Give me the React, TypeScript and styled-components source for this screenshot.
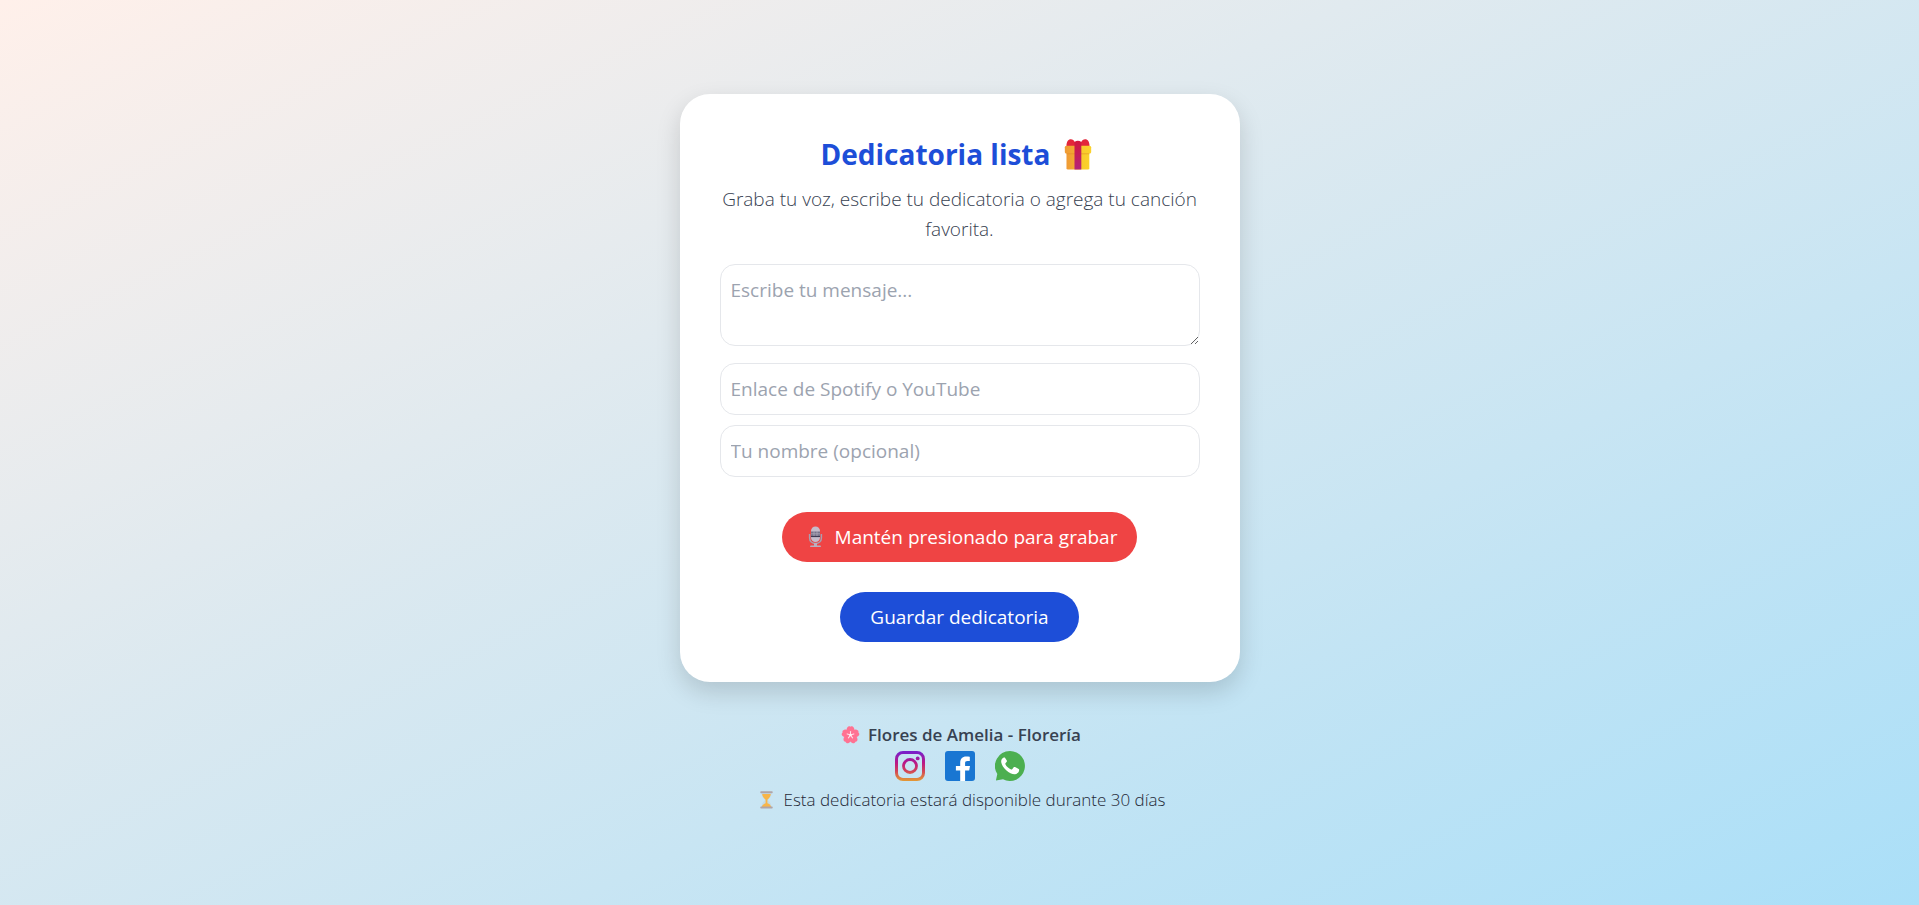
import React from "react";
import styled, { createGlobalStyle } from "styled-components";

const GlobalStyle = createGlobalStyle`
  *, *::before, *::after { box-sizing: border-box; }
  body {
    margin: 0;
    font-family: "Segoe UI", "Open Sans", "Noto Sans", sans-serif;
    font-size: 19px;
    line-height: 30px;
    color: #374151;
  }
  h1, p { margin: 0; }
`;

const Page = styled.main`
  min-height: 100vh;
  padding: 20px;
  display: flex;
  flex-direction: column;
  align-items: center;
  justify-content: center;
  background: linear-gradient(to bottom right, #fff0ea, #aadff8);
`;

const Card = styled.form`
  width: 100%;
  max-width: 560px;
  padding: 40px;
  display: flex;
  flex-direction: column;
  align-items: center;
  border-radius: 30px;
  background: #fff;
  box-shadow: 0 10px 25px rgba(0, 0, 0, 0.15);
`;

const Title = styled.h1`
  display: flex;
  justify-content: center;
  align-items: center;
  gap: 8px;
  font-size: 28px;
  line-height: 40px;
  font-weight: 700;
  color: #1d4ed8;
`;

const Intro = styled.p`
  margin: 10px 0 20px;
  text-align: center;
  font-weight: 300;
  color: #374151;
`;

const Fields = styled.div`
  width: 100%;
  display: flex;
  flex-direction: column;
  gap: 10px;
  margin-bottom: 35px;
`;

const Field = styled.input`
  display: block;
  width: 100%;
  padding: 10px;
  border: 1px solid #e5e7eb;
  border-radius: 15px;
  background: #fff;
  font: inherit;
  color: inherit;
  outline: none;
  &::placeholder { color: #9ca3af; opacity: 1; }
`;

const MessageField = styled(Field)`
  margin-bottom: 7px;
  resize: vertical;
`;

const Button = styled.button<{ $tone: string; $side: number }>`
  height: 50px;
  padding: 0 ${(p) => p.$side}px;
  display: inline-flex;
  align-items: center;
  gap: 6px;
  border: 0;
  border-radius: 25px;
  background: ${(p) => p.$tone};
  color: #fff;
  font: inherit;
  cursor: pointer;
  & + & { margin-top: 30px; }
`;

const Emoji = styled.svg<{ $size: number }>`
  flex: none;
  width: ${(p) => p.$size}px;
  height: ${(p) => p.$size}px;
`;

const Footer = styled.footer`
  margin-top: 40px;
  display: flex;
  flex-direction: column;
  align-items: center;
  font-size: 17px;
  line-height: 25px;
`;

const FooterLine = styled.p<{ $strong?: boolean }>`
  display: flex;
  align-items: center;
  gap: 5px;
  font-weight: ${(p) => (p.$strong ? 600 : 300)};
  color: ${(p) => (p.$strong ? "#374151" : "#1f2937")};
`;

const Socials = styled.nav`
  display: flex;
  gap: 20px;
  margin: 4px 0 6px;
`;

const SocialLink = styled.a`
  display: block;
  width: 30px;
  height: 30px;
  svg { display: block; width: 30px; height: 30px; }
`;

const Gift = () => (
  <Emoji $size={40} viewBox="0 0 41 41" aria-hidden="true">
    <defs>
      <linearGradient id="giftBox" x1="0" x2="1">
        <stop offset="0" stopColor="#ef9a35" />
        <stop offset="0.45" stopColor="#f4ad30" />
        <stop offset="0.6" stopColor="#f8c92c" />
        <stop offset="1" stopColor="#fbd22c" />
      </linearGradient>
      <linearGradient id="giftRibbon" x1="0" y1="0" x2="0" y2="1">
        <stop offset="0" stopColor="#d3183c" />
        <stop offset="1" stopColor="#b3237a" />
      </linearGradient>
    </defs>
    <rect x="8.700" y="15" width="23.400" height="21.500" rx="1.500" fill="url(#giftBox)" />
    <path d="M8.700 12.500C8.700 8 10.400 5.500 13.200 5.500c1.900 0 3.100 1.100 3.800 2.500h7c.7-1.400 1.900-2.500 3.800-2.500 2.800 0 4.500 2.500 4.500 7z" fill="#e3263a" />
    <rect x="7" y="12" width="27" height="8" rx="1.600" fill="url(#giftBox)" />
    <path d="M8.700 20.300h23.400" stroke="#e08b26" strokeWidth="0.800" opacity="0.700" />
    <path d="M16.900 8.500q3.500-3 7 0V36.500h-7z" fill="url(#giftRibbon)" />
  </Emoji>
);

const Microphone = () => (
  <Emoji $size={27} viewBox="0 0 27 27" aria-hidden="true">
    <path d="M7.600 11v4c0 3.400 2.600 5.500 5.900 5.500s5.900-2.100 5.900-5.500v-4" fill="none" stroke="#a99fb0" strokeWidth="1.500" />
    <path d="M12 20h3v2.500h3.200c.8 0 1 1.500.3 1.500h-10c-.7 0-.5-1.500.3-1.500H12z" fill="#b9afc0" />
    <rect x="9" y="3.500" width="9" height="15.500" rx="4.500" fill="#c6bccb" />
    <path d="M9 8.500h9v5H9z" fill="#77728a" />
    <path d="M9 10.800h9M12 8v5.800M15 8v5.800" stroke="#b3acbc" strokeWidth="0.700" />
    <path d="M9 13.600h9" stroke="#34304b" strokeWidth="1" />
  </Emoji>
);

const Flower = () => (
  <Emoji $size={25} viewBox="0 0 25 25" aria-hidden="true">
    <g fill="#ff7292">
      {[0, 72, 144, 216, 288].map((a) => (
        <path key={a} transform={`rotate(${a} 12.500 13)`} d="M12.500 13C8.500 10.500 8 7.500 9.300 5.500c.8-1.300 2.200-1.700 3.200-.8 1-.9 2.400-.5 3.200.8 1.300 2 .8 5-3.200 7.500z" />
      ))}
    </g>
    {[0, 72, 144, 216, 288].map((a) => (
      <path key={a} transform={`rotate(${a} 12.500 13)`} d="M12.500 13V9.500" stroke="#ffdce8" strokeWidth="1.100" strokeLinecap="round" />
    ))}
    <circle cx="12.500" cy="13" r="1.300" fill="#fff0f4" />
  </Emoji>
);

const Hourglass = () => (
  <Emoji $size={25} viewBox="0 0 25 25" aria-hidden="true">
    <path d="M7.500 5.500h10c0 4-1.500 5.500-3.800 7.500 2.300 2 3.800 3.500 3.800 7.500h-10c0-4 1.500-5.500 3.800-7.500-2.300-2-3.800-3.500-3.800-7.500z" fill="#c5dbe6" />
    <path d="M8.200 7h8.600c-.2 2.600-1.700 4.200-3.400 5.700v3.500c1.900.6 3.400 1.800 3.800 3.800H7.800c.4-2 1.900-3.200 3.800-3.800v-3.500c-1.700-1.500-3.200-3.100-3.400-5.700z" fill="#f8b548" />
    <rect x="6.300" y="4.200" width="12.400" height="2" rx="0.700" fill="#b0a5a8" />
    <rect x="6.300" y="19.500" width="12.400" height="2" rx="0.700" fill="#b0a5a8" />
  </Emoji>
);

const Instagram = () => (
  <svg viewBox="0 0 30 30" aria-hidden="true">
    <defs>
      <linearGradient id="instagram" x1="0" y1="0" x2="0" y2="30" gradientUnits="userSpaceOnUse">
        <stop offset="0.050" stopColor="#7a20c8" />
        <stop offset="0.400" stopColor="#bb1886" />
        <stop offset="0.650" stopColor="#d0405a" />
        <stop offset="1" stopColor="#e39a35" />
      </linearGradient>
    </defs>
    <rect x="1.500" y="1.500" width="27" height="27" rx="6.500" fill="none" stroke="url(#instagram)" strokeWidth="3" />
    <circle cx="15" cy="15" r="6.500" fill="none" stroke="url(#instagram)" strokeWidth="2.800" />
    <circle cx="22.700" cy="7.400" r="1.900" fill="url(#instagram)" />
  </svg>
);

const Facebook = () => (
  <svg viewBox="0 0 30 30" aria-hidden="true">
    <rect width="30" height="30" rx="3" fill="#1976d2" />
    <path d="M15.200 30V19.500h-4.300v-4.500h4.300v-3c0-4.300 2.100-6.500 6-6.500 1.700 0 2.800.1 3.600.3v4.200h-2.300c-1.900 0-2.400.7-2.400 2.300V15h4.900l-.8 4.500h-4.100V30z" fill="#fff" />
  </svg>
);

const Whatsapp = () => (
  <svg viewBox="0 0 30 30" aria-hidden="true">
    <path d="M15 0a15 15 0 1 1-7 28.300L.900 29.600 2.300 23A15 15 0 0 1 15 0z" fill="#4caf50" />
    <path d="M10.300 7.300c-.3-.7-.7-.7-1.100-.7-.8 0-1.300.2-1.800.8-.8.8-1.300 1.900-1.200 3.300.1 2.600 2.200 6 5 8.500 3 2.700 6.500 4.300 9 4 2.300-.3 4-1.900 4-4.100 0-.7-.1-1-.5-1.200l-3.700-1.800c-.6-.3-.9-.2-1.300.2l-1.500 1.900c-.3.400-.6.400-1.100.2-2.500-1-4.600-2.900-5.700-5.200-.2-.4-.1-.7.1-1l1.200-1.400c.3-.4.3-.7.1-1.200z" fill="#fff" />
  </svg>
);

const socials = [
  { name: "Instagram", href: "#instagram", Icon: Instagram },
  { name: "Facebook", href: "#facebook", Icon: Facebook },
  { name: "WhatsApp", href: "#whatsapp", Icon: Whatsapp },
];

export default function App() {
  return (
    <>
      <GlobalStyle />
      <Page>
        <Card onSubmit={(e: React.FormEvent) => e.preventDefault()}>
          <Title>
            Dedicatoria lista <Gift />
          </Title>
          <Intro>Graba tu voz, escribe tu dedicatoria o agrega tu canción favorita.</Intro>
          <Fields>
            <MessageField as="textarea" rows={2} aria-label="Mensaje" placeholder="Escribe tu mensaje..." />
            <Field type="url" aria-label="Enlace de Spotify o YouTube" placeholder="Enlace de Spotify o YouTube" />
            <Field type="text" aria-label="Tu nombre" placeholder="Tu nombre (opcional)" />
          </Fields>
          <Button type="button" $tone="#ef4444" $side={20}>
            <Microphone />
            Mantén presionado para grabar
          </Button>
          <Button type="submit" $tone="#1d4ed8" $side={30}>
            Guardar dedicatoria
          </Button>
        </Card>
        <Footer>
          <FooterLine $strong>
            <Flower />
            Flores de Amelia - Florería
          </FooterLine>
          <Socials aria-label="Redes sociales">
            {socials.map(({ name, href, Icon }) => (
              <SocialLink key={name} href={href} aria-label={name}>
                <Icon />
              </SocialLink>
            ))}
          </Socials>
          <FooterLine>
            <Hourglass />
            Esta dedicatoria estará disponible durante 30 días
          </FooterLine>
        </Footer>
      </Page>
    </>
  );
}
